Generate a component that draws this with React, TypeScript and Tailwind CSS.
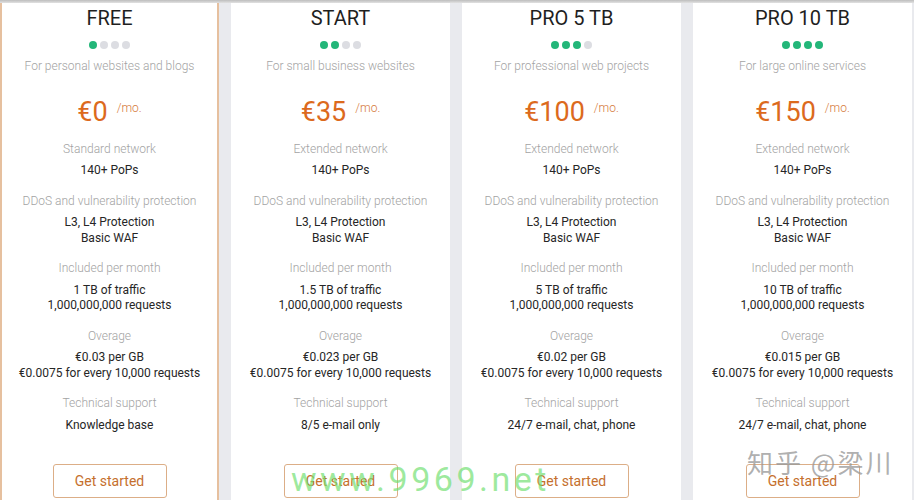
const plans = [
  {
    name: "FREE",
    level: 1,
    desc: "For personal websites and blogs",
    price: "€0",
    network: "Standard network",
    support: ["Knowledge base"],
    traffic: "1 TB of traffic",
    gb: "€0.03 per GB",
    active: true,
  },
  {
    name: "START",
    level: 2,
    desc: "For small business websites",
    price: "€35",
    network: "Extended network",
    support: ["8/5 e-mail only"],
    traffic: "1.5 TB of traffic",
    gb: "€0.023 per GB",
  },
  {
    name: "PRO 5 TB",
    level: 3,
    desc: "For professional web projects",
    price: "€100",
    network: "Extended network",
    support: ["24/7 e-mail, chat, phone"],
    traffic: "5 TB of traffic",
    gb: "€0.02 per GB",
  },
  {
    name: "PRO 10 TB",
    level: 4,
    desc: "For large online services",
    price: "€150",
    network: "Extended network",
    support: ["24/7 e-mail, chat, phone"],
    traffic: "10 TB of traffic",
    gb: "€0.015 per GB",
  },
];

function Section({ label, lines, first }: { label: string; lines: string[]; first?: boolean }) {
  return (
    <div className={(first ? "mt-[12.5px]" : "mt-[14px]") + " flex flex-col items-center"}>
      <div className="text-[12px] leading-[16px] font-light text-[#a3a3a3]">{label}</div>
      <div className="mt-[6.5px] text-[12px] leading-[15.5px] text-[#262626]">
        {lines.map((l) => (
          <div key={l}>{l}</div>
        ))}
      </div>
    </div>
  );
}

function PlanCard({ plan }: { plan: (typeof plans)[number] }) {
  return (
    <div
      className={
        "w-[219px] shrink-0 bg-white flex flex-col items-center text-center pt-[3px] " +
        (plan.active ? "border-x-2 border-[#e6c09f]" : "")
      }
    >
      <div className="text-[20px] leading-[24px] text-[#1f1f1f]">{plan.name}</div>
      <div className="mt-[11px] flex gap-[3.3px]">
        {[1, 2, 3, 4].map((i) => (
          <span
            key={i}
            className={
              "w-[8px] h-[8px] rounded-full " +
              (i <= plan.level ? "bg-[#23b679]" : "bg-[#dcdde2]")
            }
          />
        ))}
      </div>
      <div className="mt-[9px] text-[12px] leading-[16px] font-light text-[#a3a3a3]">{plan.desc}</div>
      <div className="mt-[22px] flex items-start h-[32px]">
        <span className="text-[27px] leading-[32px] text-[#dc6a1d]">{plan.price}</span>
        <span className="ml-[9px] mt-[5px] text-[12px] leading-[14px] font-light text-[#d57a3c]">/mo.</span>
      </div>
      <Section first label={plan.network} lines={["140+ PoPs"]} />
      <Section label="DDoS and vulnerability protection" lines={["L3, L4 Protection", "Basic WAF"]} />
      <Section label="Included per month" lines={[plan.traffic, "1,000,000,000 requests"]} />
      <Section label="Overage" lines={[plan.gb, "€0.0075 for every 10,000 requests"]} />
      <Section label="Technical support" lines={plan.support} />
      <button className="mt-[31px] w-[114px] h-[34px] shrink-0 rounded-[3px] border border-[#dcae87] text-[14px] text-[#c56f2d] bg-white">
        Get started
      </button>
    </div>
  );
}

export default function App() {
  return (
    <div
      className="relative w-[914px] h-[500px] overflow-hidden bg-[#e9eaee] flex flex-col"
      style={{ fontFamily: "Roboto, 'Noto Sans', sans-serif" }}
    >
      <div className="h-[3px] shrink-0 bg-gradient-to-b from-[#bdbdbd] to-[#e2e2e2]" />
      <div className="flex flex-1 gap-[12px]">
        {plans.map((p) => (
          <PlanCard key={p.name} plan={p} />
        ))}
      </div>

      <div className="absolute left-[291px] top-[459px] text-[34px] leading-[40px] tracking-[3.5px] text-[#72e072]/70">
        www.9969.net
      </div>
      <div
        className="absolute left-[747px] top-[446px] text-[26px] leading-[32px] tracking-[2px] text-[#9a9a9a]/80"
        style={{ fontFamily: "'Noto Sans CJK SC', sans-serif" }}
      >
        知乎 @梁川
      </div>
    </div>
  );
}
